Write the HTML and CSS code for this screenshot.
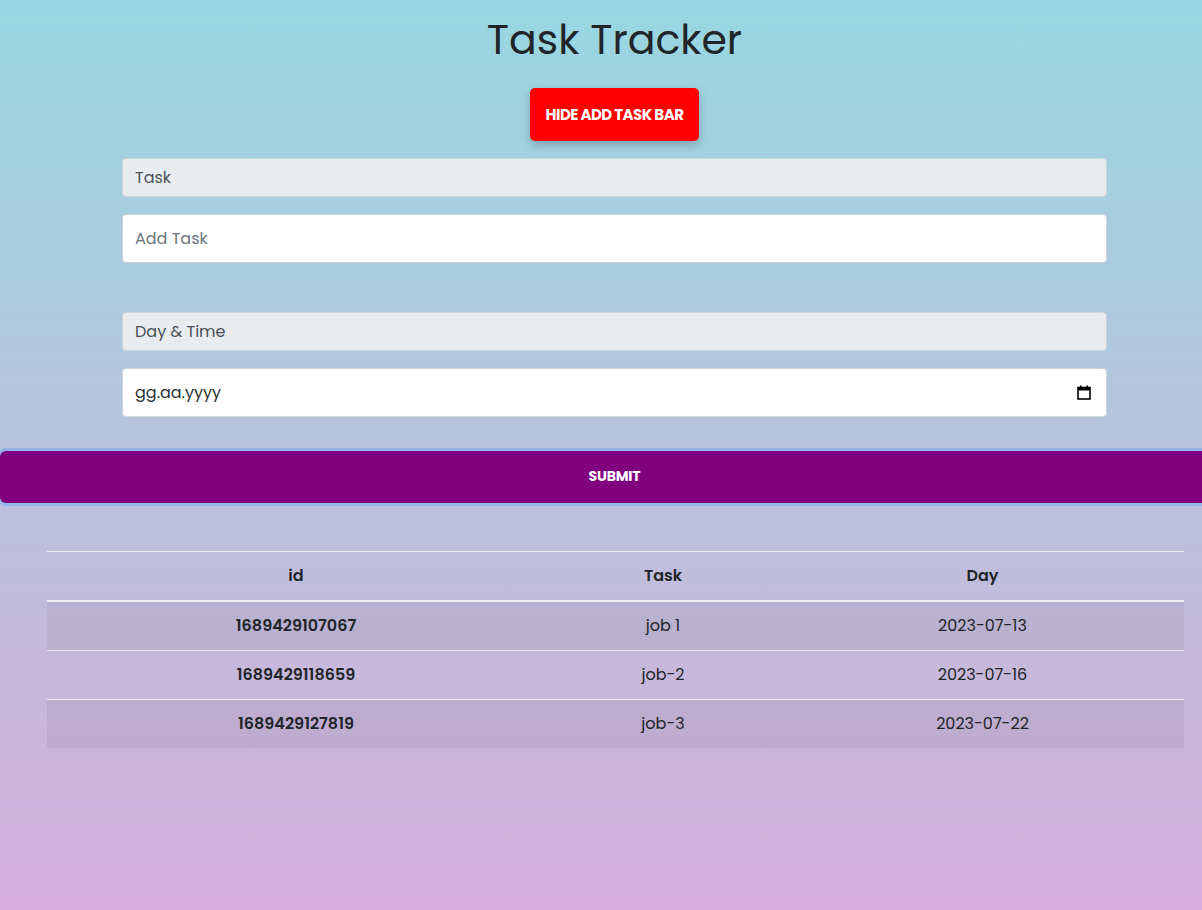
FILE: index.html
```html
<!DOCTYPE html>
<html lang="en">
<head>
<meta charset="utf-8">
<title>Task Tracker</title>
<link rel="stylesheet" href="styles.css">
</head>
<body>
<div class="page">
  <h1 class="title">Task Tracker</h1>
  <div class="toggle-wrap">
    <button class="toggle-btn" type="button">HIDE ADD TASK BAR</button>
  </div>
  <form class="task-form">
    <div class="field">
      <div class="field-label">Task</div>
      <input class="field-input" type="text" placeholder="Add Task">
    </div>
    <div class="field">
      <div class="field-label">Day &amp; Time</div>
      <div class="field-input date-input">
        <span class="date-text">gg.aa.yyyy</span>
        <svg class="cal-icon" width="14" height="15" viewBox="0 0 14 15">
          <rect x="1" y="2.5" width="12" height="11.5" fill="none" stroke="#000" stroke-width="1.6"/>
          <rect x="1" y="2.5" width="12" height="3" fill="#000"/>
          <rect x="3" y="0.5" width="1.6" height="3" fill="#000"/>
          <rect x="9.4" y="0.5" width="1.6" height="3" fill="#000"/>
        </svg>
      </div>
    </div>
  </form>
  <button class="submit-btn" type="button">SUBMIT</button>
  <table class="task-table">
    <thead>
      <tr><th class="c-id">id</th><th class="c-task">Task</th><th class="c-day">Day</th></tr>
    </thead>
    <tbody>
      <tr class="odd"><td class="id">1689429107067</td><td>job 1</td><td>2023-07-13</td></tr>
      <tr><td class="id">1689429118659</td><td>job-2</td><td>2023-07-16</td></tr>
      <tr class="odd"><td class="id">1689429127819</td><td>job-3</td><td>2023-07-22</td></tr>
    </tbody>
  </table>
</div>
</body>
</html>
```

FILE: styles.css
```css
html, body {
  margin: 0;
  padding: 0;
  overflow: hidden;
}
body {
  min-height: 910px;
  background: linear-gradient(180deg, #97d7e1 0%, #b8c3dc 50%, #d6addb 100%);
  font-family: "Poppins", "Inter", "Noto Sans", sans-serif;
  color: #212529;
}
.page {
  width: 1229px;
  padding-top: 16px;
}
.title {
  margin: 0;
  font-size: 41px;
  font-weight: 400;
  line-height: 48px;
  text-align: center;
  color: #212529;
}
.toggle-wrap {
  display: flex;
  justify-content: center;
  margin-top: 24px;
}
.toggle-btn {
  width: 169px;
  height: 53px;
  background: #ff0000;
  color: #fff;
  border: none;
  border-radius: 5px;
  font-family: inherit;
  font-size: 15px;
  font-weight: 700;
  letter-spacing: -0.55px;
  padding: 0;
  box-shadow: 0 4px 10px rgba(0, 0, 0, 0.22);
}
.task-form {
  width: 985px;
  margin: 17px 0 0 122px;
  display: flex;
  flex-direction: column;
  gap: 49px;
}
.field {
  display: flex;
  flex-direction: column;
  gap: 17px;
}
.field-label {
  height: 39px;
  box-sizing: border-box;
  border: 1px solid #ced4da;
  border-radius: 4px;
  background: #e9ecef;
  color: #495057;
  font-size: 16px;
  line-height: 37px;
  padding: 0 12px;
}
.field-input {
  height: 49px;
  box-sizing: border-box;
  border: 1px solid #ced4da;
  border-radius: 4px;
  background: #fff;
  font-family: inherit;
  font-size: 16px;
  color: #212529;
  padding: 0 12px;
  outline: none;
}
.field-input::placeholder {
  color: #6c757d;
}
.date-input {
  display: flex;
  align-items: center;
  justify-content: space-between;
  padding-right: 15px;
}
.date-text {
  color: #2b3035;
  font-size: 16px;
}
.submit-btn {
  display: block;
  width: 1229px;
  height: 52px;
  margin-top: 34px;
  padding: 0 0 2px;
  background: #800080;
  color: #fff;
  border: none;
  border-radius: 6px;
  font-family: inherit;
  font-size: 14px;
  font-weight: 700;
  letter-spacing: -0.2px;
  box-shadow: 0 0 0 3px rgba(138, 174, 240, 0.75);
}
.task-table {
  width: 1137px;
  margin: 48px 0 0 47px;
  border-collapse: collapse;
  font-size: 16px;
}
.task-table th,
.task-table td {
  text-align: center;
  height: 46px;
  padding: 0 0 2px;
  border-top: 1px solid rgba(255, 255, 255, 0.7);
  color: #212529;
}
.task-table th {
  font-weight: 600;
  border-bottom: 2px solid rgba(240, 240, 240, 0.95);
}
.c-id { width: 498px; }
.c-task { width: 236px; }
.c-day { width: 403px; }
.task-table td {
  font-weight: 400;
}
.task-table td.id {
  font-weight: 600;
}
.task-table tr.odd td {
  background: rgba(0, 0, 0, 0.05);
}
```
